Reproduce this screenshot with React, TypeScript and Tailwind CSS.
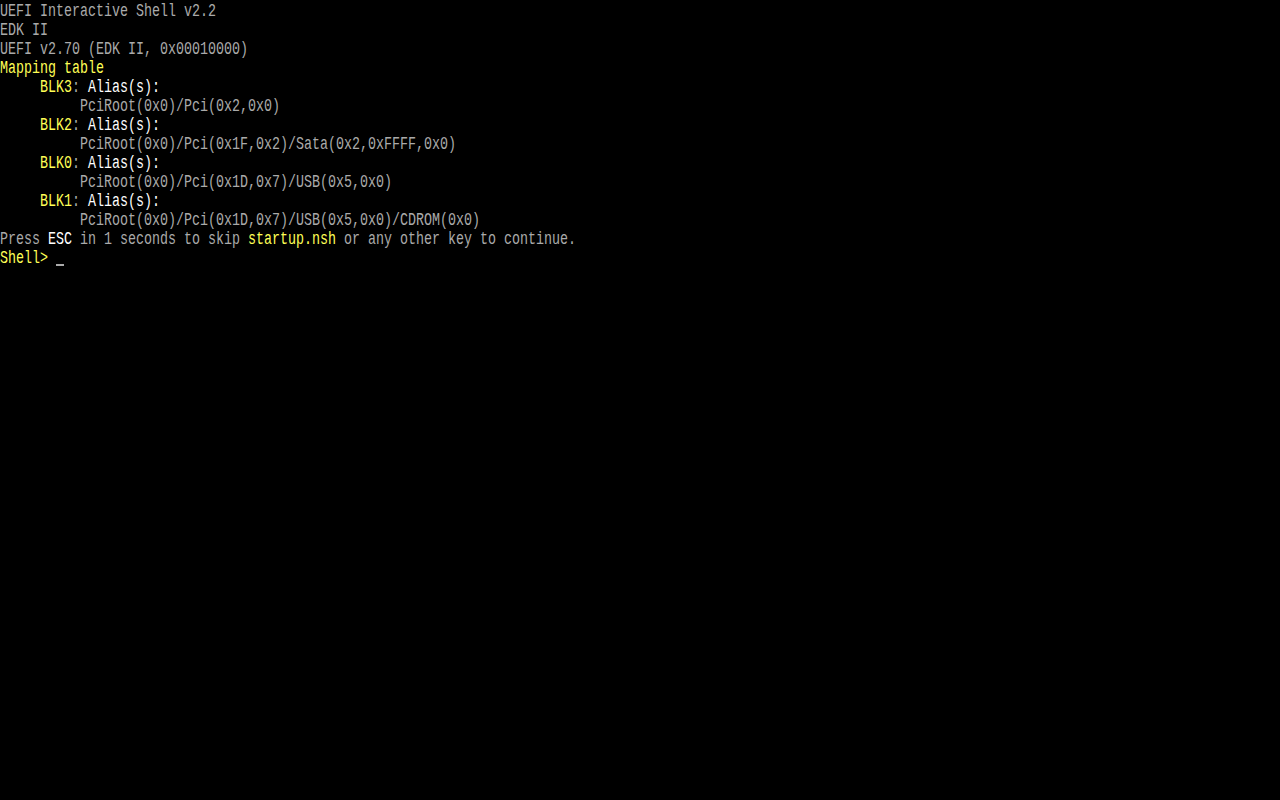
const gray = 'text-[#aaaaaa]'
const white = 'text-[#ffffff]'
const yellow = 'text-[#ffff55]'

type Seg = { text: string; color?: string }

const lines: Seg[][] = [
  [{ text: 'UEFI Interactive Shell v2.2' }],
  [{ text: 'EDK II' }],
  [{ text: 'UEFI v2.70 (EDK II, 0x00010000)' }],
  [{ text: 'Mapping table', color: yellow }],
  [{ text: '     ' }, { text: 'BLK3', color: yellow }, { text: ': ' }, { text: 'Alias(s):', color: white }],
  [{ text: '          PciRoot(0x0)/Pci(0x2,0x0)' }],
  [{ text: '     ' }, { text: 'BLK2', color: yellow }, { text: ': ' }, { text: 'Alias(s):', color: white }],
  [{ text: '          PciRoot(0x0)/Pci(0x1F,0x2)/Sata(0x2,0xFFFF,0x0)' }],
  [{ text: '     ' }, { text: 'BLK0', color: yellow }, { text: ': ' }, { text: 'Alias(s):', color: white }],
  [{ text: '          PciRoot(0x0)/Pci(0x1D,0x7)/USB(0x5,0x0)' }],
  [{ text: '     ' }, { text: 'BLK1', color: yellow }, { text: ': ' }, { text: 'Alias(s):', color: white }],
  [{ text: '          PciRoot(0x0)/Pci(0x1D,0x7)/USB(0x5,0x0)/CDROM(0x0)' }],
  [
    { text: 'Press ' },
    { text: 'ESC', color: white },
    { text: ' in 1 seconds to skip ' },
    { text: 'startup.nsh', color: yellow },
    { text: ' or any other key to continue.' },
  ],
]

const Line = ({ segs }: { segs: Seg[] }) => (
  <div className="h-[19px] whitespace-pre">
    <span className="inline-block scale-y-[1.35] origin-center">
      {segs.map((s, i) => (
        <span key={i} className={s.color ?? gray}>
          {s.text}
        </span>
      ))}
    </span>
  </div>
)

export default function App() {
  return (
    <div className="w-[1280px] h-[800px] pt-[2px] bg-black overflow-hidden font-['Liberation_Mono',monospace] text-[13.333px] leading-[19px]">
      {lines.map((segs, i) => (
        <Line key={i} segs={segs} />
      ))}
      <div className="h-[19px] whitespace-pre flex items-end">
        <span className="inline-block scale-y-[1.35] origin-center self-start">
          <span className={yellow}>Shell&gt;</span>
          <span className={gray}> </span>
        </span>
        <span className="w-[8px] h-[2px] mb-[2px] bg-[#aaaaaa]" />
      </div>
    </div>
  )
}
